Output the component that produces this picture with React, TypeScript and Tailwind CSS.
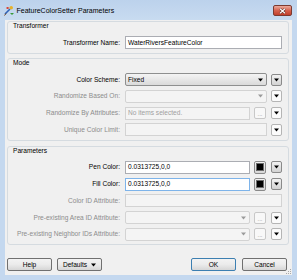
import React from "react";

const Arrow = ({ gray = false }: { gray?: boolean }) => (
  <svg width="5" height="4" viewBox="0 0 5 4" className="block">
    <path d="M0 0.5 H5 L2.5 3.5 Z" fill={gray ? "#9a9a9a" : "#000"} />
  </svg>
);

const MenuBtn = ({ active = false }: { active?: boolean }) => (
  <div
    className={`flex h-[12px] w-[11px] shrink-0 items-center justify-center rounded-[2px] border ${
      active
        ? "border-[#8a8a8a] bg-gradient-to-b from-[#f2f2f2] to-[#d2d2d2]"
        : "border-[#b5b5b5] bg-[#fbfbfb]"
    }`}
  >
    <Arrow />
  </div>
);

const DotsBtn = () => (
  <div className="flex h-[12px] w-[12px] shrink-0 items-end justify-center rounded-[2px] border border-[#c8c8c8] bg-[#f8f8f8] pb-[1px] text-[6px] leading-[6px] text-[#8a8a8a]">
    ...
  </div>
);

const Swatch = () => (
  <div className="flex h-[13px] w-[12px] shrink-0 items-center justify-center rounded-[2px] border border-[#8a8a8a] bg-gradient-to-b from-[#f2f2f2] to-[#d6d6d6]">
    <div className="h-[8px] w-[8px] border border-[#6a6a6a] bg-black" />
  </div>
);

const Row = ({
  label,
  enabled = false,
  children,
}: {
  label: string;
  enabled?: boolean;
  children: React.ReactNode;
}) => (
  <div className="flex h-[13px] items-center">
    <div
      className={`w-[111px] shrink-0 whitespace-nowrap text-right ${
        enabled ? "text-black" : "text-[#8c8c8c]"
      }`}
    >
      {label}
    </div>
    <div className="ml-[5px] flex h-full flex-1 items-center">{children}</div>
  </div>
);

const TextBox = ({
  value = "",
  placeholder = "",
  disabled = false,
  focus = false,
  className = "",
}: {
  value?: string;
  placeholder?: string;
  disabled?: boolean;
  focus?: boolean;
  className?: string;
}) => (
  <div
    className={`flex h-[13px] min-w-0 flex-1 items-center border pl-[2px] ${
      disabled
        ? "border-[#d3d3d3] bg-[#f4f4f4]"
        : focus
        ? "border-[#7eb4ea] bg-white"
        : "border-[#abadb3] bg-white"
    } ${className}`}
  >
    {value ? (
      <span className="whitespace-nowrap text-black">{value}</span>
    ) : (
      <span className="whitespace-nowrap text-[#a0a0a0]">{placeholder}</span>
    )}
  </div>
);

const Combo = ({
  value = "",
  disabled = false,
  className = "",
}: {
  value?: string;
  disabled?: boolean;
  className?: string;
}) => (
  <div
    className={`flex h-[13px] min-w-0 flex-1 items-center justify-between rounded-[2px] border pl-[2px] pr-[3px] ${
      disabled
        ? "border-[#d3d3d3] bg-[#f4f4f4]"
        : "border-[#8e8f8f] bg-gradient-to-b from-[#f4f4f4] to-[#dadada]"
    } ${className}`}
  >
    <span className="whitespace-nowrap text-black">{value}</span>
    <Arrow gray={disabled} />
  </div>
);

const Group = ({
  title,
  children,
  className = "",
}: {
  title: string;
  children: React.ReactNode;
  className?: string;
}) => (
  <div
    className={`flex flex-col rounded-[3px] border border-[#d5dbe0] pb-[3.5px] pl-[1px] pr-[6px] ${className}`}
  >
    <div className="h-[8px] pl-[4px] leading-[8px] text-black">{title}</div>
    <div className="mt-[6px] flex flex-col gap-[3.75px]">{children}</div>
  </div>
);

const WinButton = ({
  children,
  isDefault = false,
}: {
  children: React.ReactNode;
  isDefault?: boolean;
}) => (
  <div
    className={`flex h-[13px] w-[45px] items-center justify-center rounded-[2px] border bg-gradient-to-b from-[#f3f3f3] via-[#ebebeb] to-[#d6d6d6] text-black ${
      isDefault ? "border-[#3c7fb1]" : "border-[#707070]"
    }`}
  >
    {children}
  </div>
);

export default function App() {
  return (
    <div className="h-[280px] w-[297px] bg-[#c4d8ef] font-['Liberation_Sans',Arial,sans-serif] text-[6.6px] leading-[8px]">
      {/* title bar */}
      <div className="flex h-[20px] items-center bg-gradient-to-b from-[#bcd2ec] to-[#c8dbf0] pl-[4px] pr-[5px]">
        <svg width="11" height="11" viewBox="0 0 11 11" className="shrink-0">
          <path d="M1 9 L6 4" stroke="#2f63b8" strokeWidth="1.6" />
          <circle cx="7.2" cy="2.8" r="1.8" fill="#e6b22a" />
          <path d="M2 3 Q4 1 5 3 Q4 5 2 3Z" fill="#d9372a" />
          <path d="M6 8 L10 8 L8 10 Z" fill="#3b9a3b" />
          <path d="M0.5 10.5 L2 8.5" stroke="#7a4a1e" strokeWidth="1" />
        </svg>
        <span className="ml-[1.5px] mt-[1px] whitespace-nowrap text-[7px] text-black">
          FeatureColorSetter Parameters
        </span>
        <div className="ml-auto mt-[1px] flex h-[11px] w-[19px] items-center justify-center rounded-[2px] border border-[#7b3a30] bg-gradient-to-b from-[#e9a99c] via-[#d6614e] to-[#c13f2b]">
          <svg width="7" height="6" viewBox="0 0 7 6">
            <path d="M1 0.8 L6 5.2 M6 0.8 L1 5.2" stroke="#5a2a22" strokeWidth="2.2" />
            <path d="M1 0.8 L6 5.2 M6 0.8 L1 5.2" stroke="#ffffff" strokeWidth="1.2" />
          </svg>
        </div>
      </div>

      {/* body */}
      <div className="relative mx-[5px] flex h-[255px] flex-col bg-[#f0f0f0] pl-[2px] pr-[3px] pt-[1px]">
        <Group title="Transformer">
          <Row label="Transformer Name:" enabled>
            <TextBox value="WaterRiversFeatureColor" />
          </Row>
        </Group>

        <Group title="Mode" className="mt-[4.5px]">
          <Row label="Color Scheme:" enabled>
            <Combo value="Fixed" />
            <div className="ml-[4px]" />
            <MenuBtn active />
          </Row>
          <Row label="Randomize Based On:">
            <Combo disabled />
            <div className="ml-[4px]" />
            <MenuBtn />
          </Row>
          <Row label="Randomize By Attributes:">
            <TextBox disabled placeholder="No items selected." />
            <div className="ml-[4px]" />
            <DotsBtn />
            <div className="ml-[5px]" />
            <MenuBtn />
          </Row>
          <Row label="Unique Color Limit:">
            <TextBox disabled />
            <div className="ml-[4px]" />
            <MenuBtn />
          </Row>
        </Group>

        <Group title="Parameters" className="mt-[5px]">
          <Row label="Pen Color:" enabled>
            <TextBox value="0.0313725,0,0" />
            <div className="ml-[4px]" />
            <Swatch />
            <div className="ml-[5px]" />
            <MenuBtn active />
          </Row>
          <Row label="Fill Color:" enabled>
            <TextBox value="0.0313725,0,0" focus />
            <div className="ml-[4px]" />
            <Swatch />
            <div className="ml-[5px]" />
            <MenuBtn active />
          </Row>
          <Row label="Color ID Attribute:">
            <TextBox disabled />
          </Row>
          <Row label="Pre-existing Area ID Attribute:">
            <Combo disabled />
            <div className="ml-[4px]" />
            <DotsBtn />
            <div className="ml-[5px]" />
            <MenuBtn />
          </Row>
          <Row label="Pre-existing Neighbor IDs Attribute:">
            <Combo disabled />
            <div className="ml-[4px]" />
            <DotsBtn />
            <div className="ml-[5px]" />
            <MenuBtn />
          </Row>
        </Group>

        <div className="mb-[4px] mt-auto flex items-center pr-[2px]">
          <WinButton>Help</WinButton>
          <div className="ml-[5px]">
            <WinButton>
              <span>Defaults</span>
              <span className="ml-[4px]">
                <Arrow />
              </span>
            </WinButton>
          </div>
          <div className="ml-auto flex gap-[6px]">
            <WinButton isDefault>OK</WinButton>
            <WinButton>Cancel</WinButton>
          </div>
        </div>

        <svg
          width="6"
          height="6"
          viewBox="0 0 6 6"
          className="absolute bottom-[0px] right-[0px]"
        >
          <rect x="4" y="0" width="1" height="1" fill="#a8a8a8" />
          <rect x="2" y="2" width="1" height="1" fill="#a8a8a8" />
          <rect x="4" y="2" width="1" height="1" fill="#a8a8a8" />
          <rect x="0" y="4" width="1" height="1" fill="#a8a8a8" />
          <rect x="2" y="4" width="1" height="1" fill="#a8a8a8" />
          <rect x="4" y="4" width="1" height="1" fill="#a8a8a8" />
        </svg>
      </div>
    </div>
  );
}
